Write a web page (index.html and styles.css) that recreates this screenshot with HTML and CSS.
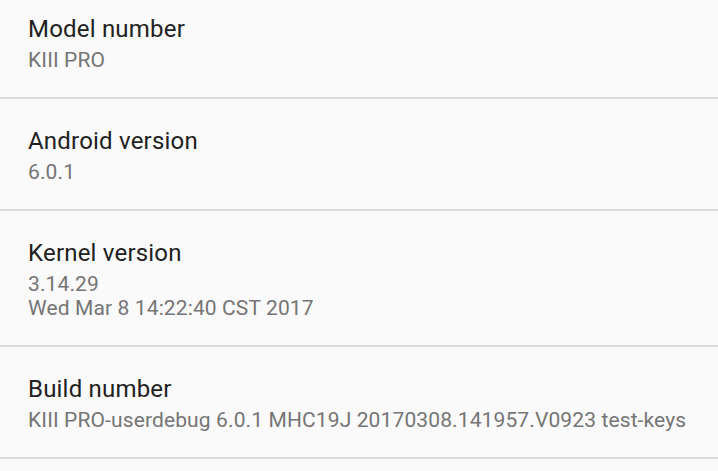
FILE: index.html
```html
<!DOCTYPE html>
<html lang="en">
<head>
  <meta charset="UTF-8" />
  <meta name="viewport" content="width=device-width, initial-scale=1.0" />
  <title>About device</title>
  <link rel="stylesheet" href="styles.css">
</head>
<body>
  <ul class="pref-list">
    <li class="pref">
      <div class="pref-title">Model number</div>
      <div class="pref-summary">KIII PRO</div>
    </li>
    <li class="pref">
      <div class="pref-title">Android version</div>
      <div class="pref-summary">6.0.1</div>
    </li>
    <li class="pref">
      <div class="pref-title">Kernel version</div>
      <div class="pref-summary">3.14.29<br>Wed Mar 8 14:22:40 CST 2017</div>
    </li>
    <li class="pref">
      <div class="pref-title">Build number</div>
      <div class="pref-summary">KIII PRO-userdebug 6.0.1 MHC19J 20170308.141957.V0923 test-keys</div>
    </li>
  </ul>
</body>
</html>
```

FILE: styles.css
```css
:root {
  --bg: #fafafa;
  --divider: #dadada;
  --title: #212121;
  --summary: #757575;
}
*, *::before, *::after { box-sizing: border-box; }
html, body {
  margin: 0; padding: 0; height: 100%;
  background: var(--bg);
  font-family: Roboto, 'Noto Sans', sans-serif;
  overflow: hidden;
}

/* list is scrolled a little, first row starts above the top edge */
.pref-list { list-style: none; margin: -13px 0 0; padding: 0; }
.pref {
  padding: 26px 27px 25px 28px;
  border-bottom: 2px solid var(--divider);
}
.pref-title { font-size: 24px; line-height: 32px; color: var(--title); letter-spacing: 0.2px; }
.pref-summary {
  margin-top: 3px;
  font-size: 21px; line-height: 24px; color: var(--summary);
  letter-spacing: 0.12px;
  white-space: nowrap;
}
```
